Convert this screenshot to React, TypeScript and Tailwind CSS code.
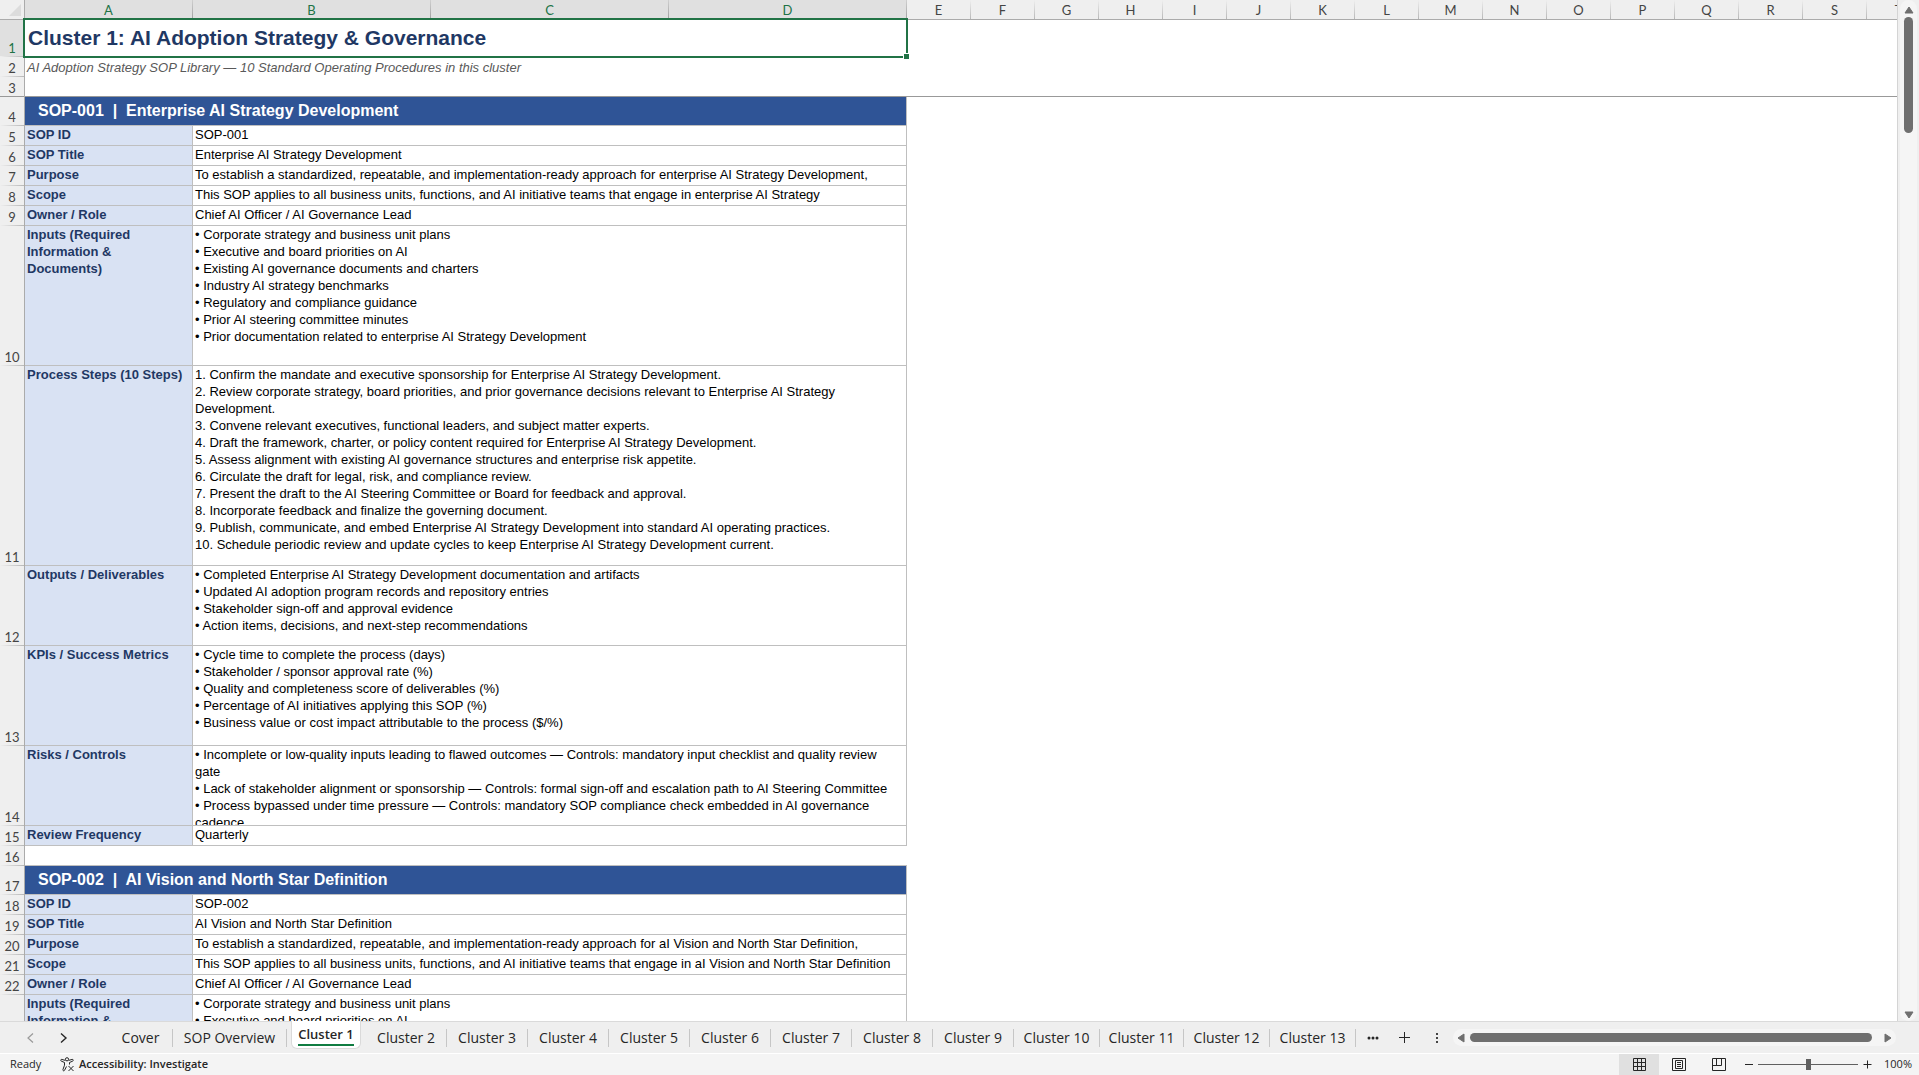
import React from 'react';

type Row = {
  label: string;
  lines: string[];
  height: string;
};

type Sop = {
  title: string;
  rows: Row[];
};

const lineRow = (label: string, text: string): Row => ({ label, lines: [text], height: 'h-5' });

const inputs = [
  '• Corporate strategy and business unit plans',
  '• Executive and board priorities on AI',
  '• Existing AI governance documents and charters',
  '• Industry AI strategy benchmarks',
  '• Regulatory and compliance guidance',
  '• Prior AI steering committee minutes',
];

const sops: Sop[] = [
  {
    title: 'SOP-001  |  Enterprise AI Strategy Development',
    rows: [
      lineRow('SOP ID', 'SOP-001'),
      lineRow('SOP Title', 'Enterprise AI Strategy Development'),
      lineRow('Purpose', 'To establish a standardized, repeatable, and implementation-ready approach for enterprise AI Strategy Development,'),
      lineRow('Scope', 'This SOP applies to all business units, functions, and AI initiative teams that engage in enterprise AI Strategy'),
      lineRow('Owner / Role', 'Chief AI Officer / AI Governance Lead'),
      {
        label: 'Inputs (Required Information & Documents)',
        height: 'h-[140px]',
        lines: [...inputs, '• Prior documentation related to enterprise AI Strategy Development'],
      },
      {
        label: 'Process Steps (10 Steps)',
        height: 'h-[200px]',
        lines: [
          '1. Confirm the mandate and executive sponsorship for Enterprise AI Strategy Development.',
          '2. Review corporate strategy, board priorities, and prior governance decisions relevant to Enterprise AI Strategy',
          'Development.',
          '3. Convene relevant executives, functional leaders, and subject matter experts.',
          '4. Draft the framework, charter, or policy content required for Enterprise AI Strategy Development.',
          '5. Assess alignment with existing AI governance structures and enterprise risk appetite.',
          '6. Circulate the draft for legal, risk, and compliance review.',
          '7. Present the draft to the AI Steering Committee or Board for feedback and approval.',
          '8. Incorporate feedback and finalize the governing document.',
          '9. Publish, communicate, and embed Enterprise AI Strategy Development into standard AI operating practices.',
          '10. Schedule periodic review and update cycles to keep Enterprise AI Strategy Development current.',
        ],
      },
      {
        label: 'Outputs / Deliverables',
        height: 'h-20',
        lines: [
          '• Completed Enterprise AI Strategy Development documentation and artifacts',
          '• Updated AI adoption program records and repository entries',
          '• Stakeholder sign-off and approval evidence',
          '• Action items, decisions, and next-step recommendations',
        ],
      },
      {
        label: 'KPIs / Success Metrics',
        height: 'h-[100px]',
        lines: [
          '• Cycle time to complete the process (days)',
          '• Stakeholder / sponsor approval rate (%)',
          '• Quality and completeness score of deliverables (%)',
          '• Percentage of AI initiatives applying this SOP (%)',
          '• Business value or cost impact attributable to the process ($/%)',
        ],
      },
      {
        label: 'Risks / Controls',
        height: 'h-20',
        lines: [
          '• Incomplete or low-quality inputs leading to flawed outcomes — Controls: mandatory input checklist and quality review',
          'gate',
          '• Lack of stakeholder alignment or sponsorship — Controls: formal sign-off and escalation path to AI Steering Committee',
          '• Process bypassed under time pressure — Controls: mandatory SOP compliance check embedded in AI governance',
          'cadence',
        ],
      },
      lineRow('Review Frequency', 'Quarterly'),
    ],
  },
  {
    title: 'SOP-002  |  AI Vision and North Star Definition',
    rows: [
      lineRow('SOP ID', 'SOP-002'),
      lineRow('SOP Title', 'AI Vision and North Star Definition'),
      lineRow('Purpose', 'To establish a standardized, repeatable, and implementation-ready approach for aI Vision and North Star Definition,'),
      lineRow('Scope', 'This SOP applies to all business units, functions, and AI initiative teams that engage in aI Vision and North Star Definition'),
      lineRow('Owner / Role', 'Chief AI Officer / AI Governance Lead'),
      {
        label: 'Inputs (Required Information & Documents)',
        height: 'h-[140px]',
        lines: inputs.slice(0, 2),
      },
    ],
  },
];

const wideColumns = ['A', 'B', 'C', 'D'];
const restColumns = 'EFGHIJKLMNOPQRST'.split('');

const tabs = [
  { name: 'Cover', width: 'w-16' },
  { name: 'SOP Overview', width: 'w-[114px]' },
  { name: 'Cluster 1', width: 'w-[79px]' },
  ...['2', '3', '4', '5', '6', '7', '8', '9'].map((n) => ({ name: `Cluster ${n}`, width: 'w-[81px]' })),
  ...['10', '11', '12', '13'].map((n) => ({ name: `Cluster ${n}`, width: n === '11' ? 'w-[84px]' : 'w-[86px]' })),
];

const ColumnHead = ({ name, selected }: { name: string; selected?: boolean }) => (
  <th
    scope="col"
    className={`h-5 border-b p-0 text-[13px] font-normal leading-5 ${
      selected ? 'border-[#217346] bg-[#e0e0e0] text-[#217346]' : 'border-[#ababab] bg-[#efefef] text-[#444444]'
    }`}
  >
    <div className="flex h-[19px]">
      <span className="flex-1 text-center">{name}</span>
      <span className={`w-px bg-linear-to-b ${selected ? 'from-[#d0d0d0] to-[#a0a0a0]' : 'from-[#efefef] to-[#b8b8b8]'}`} />
    </div>
  </th>
);

type RowHeadProps = {
  n: number;
  height: string;
  selected?: boolean;
  frozen?: boolean;
};

const RowHead = ({ n, height, selected, frozen }: RowHeadProps) => (
  <th
    scope="row"
    className={`border-r border-[#ababab] p-0 align-bottom text-[13px] font-normal leading-4 ${
      selected ? 'bg-[#e0e0e0] text-[#217346]' : 'bg-[#efefef] text-[#444444]'
    }`}
  >
    <div className={`flex flex-col justify-end ${height}`}>
      <span className="text-center">{n === 23 ? '' : n}</span>
      <span className={`h-px ${frozen ? 'bg-[#999999]' : 'bg-linear-to-r from-[#efefef] to-[#b8b8b8]'}`} />
    </div>
  </th>
);

const SopBlock = ({ sop, first }: { sop: Sop; first: number }) => (
  <>
    <tr>
      <RowHead n={first} height="h-[29px]" />
      <td colSpan={4} className="border-b border-r border-[#bfbfbf] bg-[#2f5496] p-0 align-top">
        <div className="whitespace-pre pl-[13px] pt-0.5 text-base font-bold leading-6 text-white">{sop.title}</div>
      </td>
    </tr>
    {sop.rows.map((row, i) => (
      <tr key={row.label}>
        <RowHead n={first + 1 + i} height={row.height} />
        <td className="border-b border-r border-[#bfbfbf] bg-[#d9e2f3] p-0 align-top font-bold text-[#1f3864]">
          <div className="pl-0.5 pr-2">{row.label}</div>
        </td>
        <td colSpan={3} className="border-r border-[#bfbfbf] p-0 align-top">
          <CellText row={row} />
        </td>
      </tr>
    ))}
  </>
);

// Text that is taller than its row is cut off at the row's lower border
const CellText = ({ row }: { row: Row }) => (
  <div className={`overflow-hidden border-b border-[#bfbfbf] ${row.height}`}>
    {row.lines.map((line) => (
      <div key={line} className="whitespace-nowrap pl-0.5">
        {line}
      </div>
    ))}
  </div>
);

const Sheet = () => (
  <div className="min-w-0 flex-1 overflow-hidden border-r border-[#d4d4d4] bg-white">
    <table className="w-[1931px] table-fixed border-separate border-spacing-0 font-['Liberation_Sans',Arial,sans-serif] text-[13px] leading-[17px] text-black">
      <colgroup>
        <col className="w-[25px]" />
        <col className="w-[168px]" />
        <col className="w-[238px]" />
        <col className="w-[238px]" />
        <col className="w-[238px]" />
        {restColumns.map((c) => (
          <col key={c} className="w-16" />
        ))}
      </colgroup>
      <thead className="font-[Lato,sans-serif]">
        <tr>
          <th className="border-b border-r border-[#ababab] bg-[#efefef] p-0">
            <svg className="ml-2 h-[15px] w-[15px]" viewBox="0 0 15 15" aria-hidden="true">
              <path d="M13 2v12H1z" fill="#dcdcdc" />
            </svg>
          </th>
          {wideColumns.map((c) => (
            <ColumnHead key={c} name={c} selected />
          ))}
          {restColumns.map((c) => (
            <ColumnHead key={c} name={c} />
          ))}
        </tr>
      </thead>
      <tbody className="[&_th]:font-[Lato,sans-serif]">
        <tr>
          <RowHead n={1} height="h-[37px]" selected />
          <td colSpan={4} className="relative p-0 align-top">
            <h1 className="pl-[3px] pt-1 text-[21px] font-bold leading-7 text-[#1f3864]">
              Cluster 1: AI Adoption Strategy &amp; Governance
            </h1>
            <div className="pointer-events-none absolute -bottom-px -left-0.5 -right-px -top-0.5 border-2 border-[#217346]" />
            <div className="absolute -bottom-0.5 -right-0.5 h-1.5 w-1.5 border-l border-t border-white bg-[#217346]" />
          </td>
        </tr>
        <tr>
          <RowHead n={2} height="h-5" />
          <td colSpan={4} className="p-0 pl-0.5 align-middle italic text-[#595959]">
            AI Adoption Strategy SOP Library — 10 Standard Operating Procedures in this cluster
          </td>
        </tr>
        <tr>
          <RowHead n={3} height="h-5" frozen />
          <td colSpan={20} className="border-b border-[#999999] p-0" />
        </tr>
        <SopBlock sop={sops[0]} first={4} />
        <tr>
          <RowHead n={16} height="h-5" />
          <td colSpan={4} className="border-b border-[#bfbfbf] p-0" />
        </tr>
        <SopBlock sop={sops[1]} first={17} />
      </tbody>
    </table>
  </div>
);

const VerticalScroll = () => (
  <div className="w-[21px] px-0.5">
    <div className="flex h-full flex-col items-center rounded-full bg-[#f5f5f5] pt-1">
      <button type="button" aria-label="Scroll up" className="flex h-3 items-center">
        <svg className="h-2 w-2.5" viewBox="0 0 10 8" aria-hidden="true">
          <path d="M5 1 9 7H1z" fill="#6f6f6f" stroke="#6f6f6f" strokeLinejoin="round" />
        </svg>
      </button>
      <div className="flex-1 pt-px">
        <div className="h-[116px] w-[9px] rounded-full bg-[#6f6f6f]" />
      </div>
      <button type="button" aria-label="Scroll down" className="flex h-3 items-center">
        <svg className="h-2 w-2.5" viewBox="0 0 10 8" aria-hidden="true">
          <path d="M5 7 1 1h8z" fill="#6f6f6f" stroke="#6f6f6f" strokeLinejoin="round" />
        </svg>
      </button>
    </div>
  </div>
);

const HorizontalScroll = () => (
  <div className="mr-[23px] flex h-[17px] flex-1 items-center rounded-full bg-[#f5f5f5] px-1">
    <button type="button" aria-label="Scroll left">
      <svg className="h-2.5 w-2" viewBox="0 0 8 10" aria-hidden="true">
        <path d="M1 5 7 1v8z" fill="#6f6f6f" stroke="#6f6f6f" strokeLinejoin="round" />
      </svg>
    </button>
    <div className="ml-[5px] mr-3 h-[9px] flex-1 rounded-full bg-[#6f6f6f]" />
    <button type="button" aria-label="Scroll right">
      <svg className="h-2.5 w-2" viewBox="0 0 8 10" aria-hidden="true">
        <path d="M7 5 1 1v8z" fill="#6f6f6f" stroke="#6f6f6f" strokeLinejoin="round" />
      </svg>
    </button>
  </div>
);

const TabBar = () => (
  <div className="flex h-8 items-center border-t border-[#dadada] bg-[#efefef] text-sm text-[#262626]">
    <button type="button" aria-label="Previous sheet" className="ml-[26px]">
      <svg className="h-3 w-2" viewBox="0 0 8 12" fill="none" stroke="#9a9a9a" strokeWidth="1.2" aria-hidden="true">
        <path d="M7 1.5 2 6l5 4.5" />
      </svg>
    </button>
    <button type="button" aria-label="Next sheet" className="ml-[26px]">
      <svg className="h-3 w-2" viewBox="0 0 8 12" fill="none" stroke="#262626" strokeWidth="1.4" aria-hidden="true">
        <path d="M1 1.5 6 6l-5 4.5" />
      </svg>
    </button>
    <nav className="ml-[41px] flex h-full items-center">
      {tabs.map((tab) =>
        tab.name === 'Cluster 1' ? (
          <div key={tab.name} className={`flex h-full border-r border-[#efefef] px-1 ${tab.width}`}>
            <button
              type="button"
              className="-mt-px flex h-7 flex-1 justify-center whitespace-nowrap rounded-b-md border border-t-0 border-[#dadada] bg-white text-[13px] font-semibold"
            >
              <span className="mt-[3px] h-[22px] border-b-2 border-[#107c41] leading-5">{tab.name}</span>
            </button>
          </div>
        ) : (
          <button
            key={tab.name}
            type="button"
            className={`h-[18px] whitespace-nowrap border-r border-[#c6c6c6] text-center leading-4 ${tab.width}`}
          >
            {tab.name}
          </button>
        ),
      )}
    </nav>
    <button type="button" aria-label="More sheets" className="ml-[11px]">
      <svg className="h-1 w-3" viewBox="0 0 12 4" fill="#262626" aria-hidden="true">
        <circle cx="2" cy="2" r="1.5" />
        <circle cx="6" cy="2" r="1.5" />
        <circle cx="10" cy="2" r="1.5" />
      </svg>
    </button>
    <button type="button" aria-label="New sheet" className="ml-5">
      <svg className="h-[11px] w-[11px]" viewBox="0 0 11 11" stroke="#262626" aria-hidden="true">
        <path d="M5.5 0v11M0 5.5h11" />
      </svg>
    </button>
    <span className="ml-[26px] mr-[15px] flex flex-col gap-0.5">
      <i className="h-0.5 w-0.5 bg-[#444444]" />
      <i className="h-0.5 w-0.5 bg-[#444444]" />
      <i className="h-0.5 w-0.5 bg-[#444444]" />
    </span>
    <HorizontalScroll />
  </div>
);

const StatusBar = () => (
  <div className="flex h-[22px] items-center border-t border-white bg-[#f4f4f4] text-[11px] text-[#262626]">
    <span className="ml-2.5 w-[50px]">Ready</span>
    <button type="button" className="flex items-center gap-1 font-semibold">
      <svg className="h-[15px] w-[15px]" viewBox="0 0 15 15" fill="none" stroke="#262626" aria-hidden="true">
        <circle cx="7" cy="2.3" r="1.6" />
        <path d="M5.3 3.4 1.8 2.4c-1.2-.2-1.5 1.3-.5 1.7L4.5 5.5v2.7l-1.6 4.5c-.2 1.2 1.3 1.6 1.7.5L6.5 9.5M8.7 3.4l3.5-1c1.2-.2 1.5 1.3.5 1.7L9.5 5.5v2M8.5 9l5 5M13.5 9l-5 5" />
      </svg>
      Accessibility: Investigate
    </button>
    <div className="ml-auto flex h-full items-center">
      <button type="button" aria-label="Normal view" className="flex h-full w-10 items-center justify-center bg-[#e0e0e0]">
        <svg className="h-[13px] w-[13px]" viewBox="0 0 13 13" fill="none" stroke="#262626" aria-hidden="true">
          <path d="M.5.5h12v12H.5zM4.5.5v12M8.5.5v12M.5 4.5h12M.5 8.5h12" />
        </svg>
      </button>
      <button type="button" aria-label="Page layout view" className="flex h-full w-10 items-center justify-center">
        <svg className="h-[13px] w-3.5" viewBox="0 0 14 13" fill="none" stroke="#262626" aria-hidden="true">
          <path d="M.5.5h13v12H.5zM3.5 2.5h7v8h-7zM5 4.5h4M5 6.5h4M5 8.5h4" />
        </svg>
      </button>
      <button type="button" aria-label="Page break preview" className="flex h-full w-10 items-center justify-center">
        <svg className="h-[13px] w-3.5" viewBox="0 0 14 13" fill="none" stroke="#262626" aria-hidden="true">
          <path d="M.5.5h13v12H.5zM4.5.5v7M9.5.5v7M.5 7.5h9" />
        </svg>
      </button>
      <button type="button" aria-label="Zoom out" className="ml-1.5 h-px w-2 bg-[#262626]" />
      <input
        type="range"
        aria-label="Zoom"
        min="10"
        max="190"
        defaultValue="100"
        className="mx-[5px] h-3 w-[100px] appearance-none bg-transparent [&::-webkit-slider-runnable-track]:h-px [&::-webkit-slider-runnable-track]:bg-[#606060] [&::-webkit-slider-thumb]:-mt-[5px] [&::-webkit-slider-thumb]:h-[11px] [&::-webkit-slider-thumb]:w-[5px] [&::-webkit-slider-thumb]:appearance-none [&::-webkit-slider-thumb]:bg-[#606060]"
      />
      <button type="button" aria-label="Zoom in">
        <svg className="h-[9px] w-[9px]" viewBox="0 0 9 9" stroke="#262626" aria-hidden="true">
          <path d="M4.5.5v8M.5 4.5h8" />
        </svg>
      </button>
      <span className="ml-3 mr-[7px]">100%</span>
    </div>
  </div>
);

const App = () => (
  <div className="flex h-screen flex-col overflow-hidden bg-[#efefef] font-['Open_Sans','Noto_Sans',sans-serif]">
    <main className="flex min-h-0 flex-1">
      <Sheet />
      <VerticalScroll />
    </main>
    <TabBar />
    <StatusBar />
  </div>
);

export default App;
